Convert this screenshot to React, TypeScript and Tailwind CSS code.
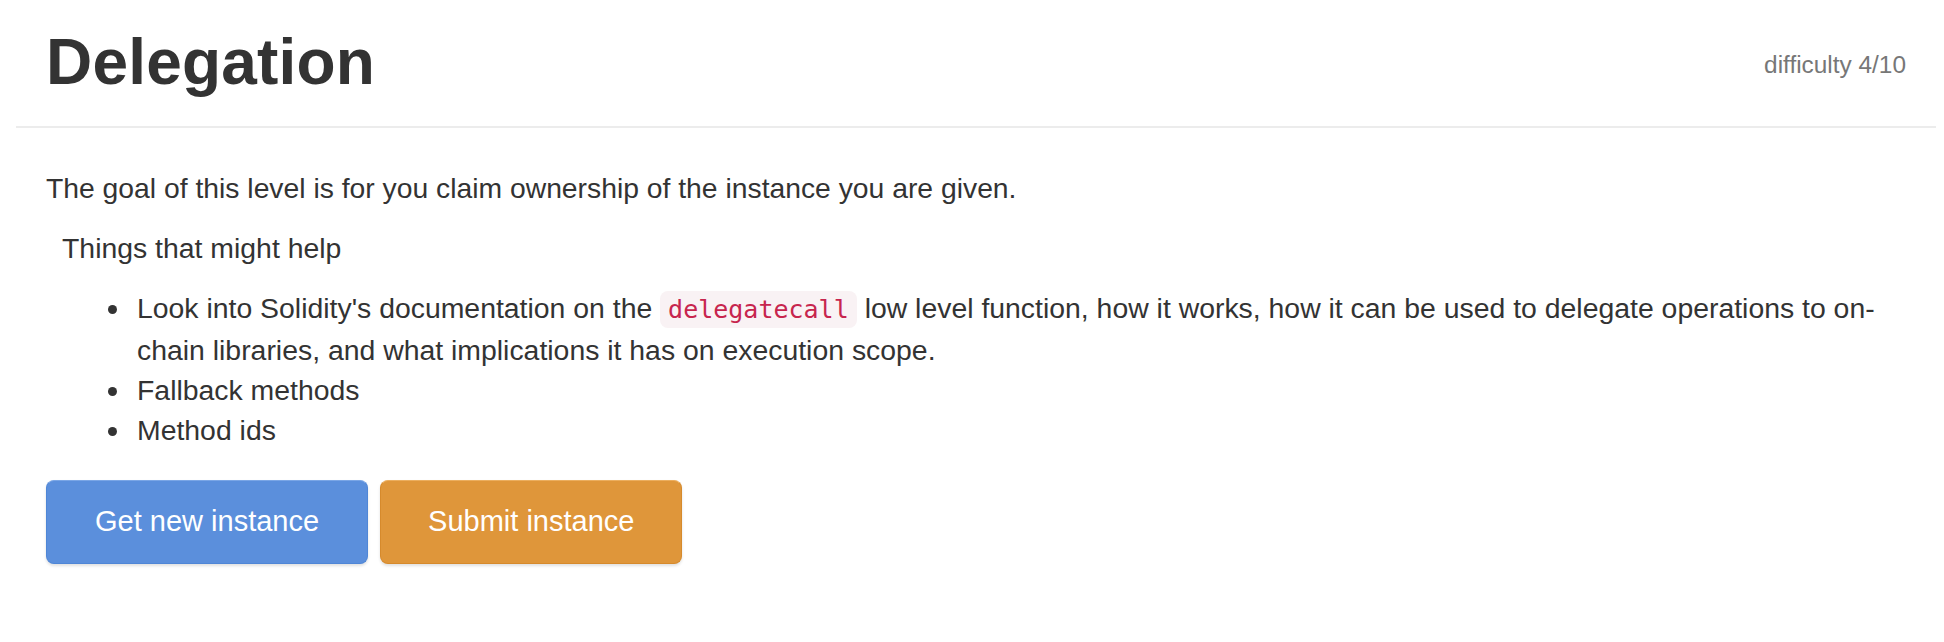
import React from "react";

export default function App() {
  return (
    <div
      className="min-h-[642px] w-full bg-white text-[#333]"
      style={{ fontFamily: '"Liberation Sans", Arial, Helvetica, sans-serif' }}
    >
      <div className="pl-[16px] pr-[8px]">
        <div className="flex items-start justify-between border-b-2 border-[#ececec] px-[30px] pt-[29px] pb-[31px]">
          <h1 className="text-[64px] font-bold leading-[66px] tracking-[0.2px] text-[#333]">Delegation</h1>
          <span className="mt-[19px] text-[24.4px] leading-[34px] text-[#777]">difficulty 4/10</span>
        </div>
        <div className="px-[30px] pt-[40px]">
          <p className="mb-[20px] text-[28.3px] leading-[40px]">
            The goal of this level is for you claim ownership of the instance you are given.
          </p>
          <p className="mb-[20px] pl-[16px] text-[28.4px] leading-[40px]">Things that might help</p>
          <ul className="mb-[30px] list-disc pl-[86px] text-[28.4px] leading-[40px]">
            <li className="pl-[5px]">
              Look into Solidity's documentation on the{" "}
              <code
                className="rounded-[8px] bg-[#f9f2f4] px-[8px] py-[4px] text-[25px] text-[#c7254e]"
                style={{ fontFamily: '"DejaVu Sans Mono", "Liberation Mono", monospace' }}
              >
                delegatecall
              </code>{" "}
              low level function, how it works, how it can be used to delegate operations to on-chain libraries, and
              what implications it has on execution scope.
            </li>
            <li className="pl-[5px]">Fallback methods</li>
            <li className="pl-[5px]">Method ids</li>
          </ul>
          <div className="flex gap-[12px]">
            <button className="h-[84px] rounded-[8px] border border-[#4f86d6] border-t-[#7aa6e6] bg-[#5b8fdc] px-[48px] text-[29px] text-white shadow-[0_2px_3px_rgba(0,0,0,0.12)]">
              Get new instance
            </button>
            <button className="h-[84px] rounded-[8px] border border-[#d68a2c] border-t-[#ecae5e] bg-[#df963a] px-[47px] text-[29px] text-white shadow-[0_2px_3px_rgba(0,0,0,0.12)]">
              Submit instance
            </button>
          </div>
        </div>
      </div>
    </div>
  );
}
